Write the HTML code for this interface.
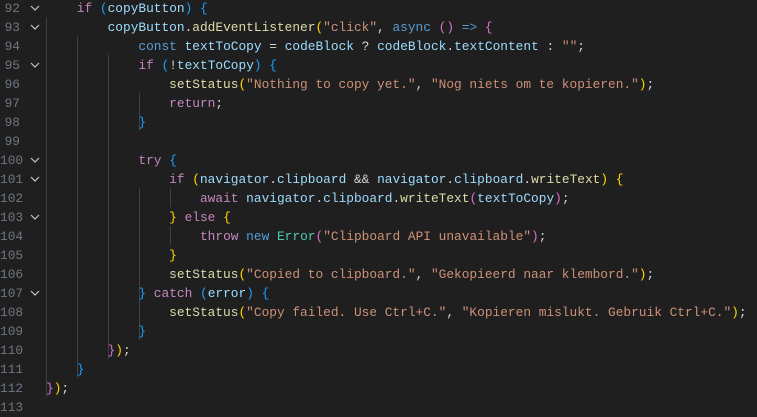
<!DOCTYPE html>
<html><head><meta charset="utf-8"><style>
body{margin:0;width:757px;height:417px;background:#1f1f1f;overflow:hidden;position:relative;font-family:"Liberation Mono",monospace;font-size:12.83px}
.l{position:absolute;left:0;height:19px;line-height:19px;width:757px;white-space:pre}
.n{position:absolute;left:0;width:20px;text-align:right;color:#6e7681}
.c{position:absolute;left:46px;color:#d4d4d4}
.f{position:absolute;left:29px;top:0;width:12px;height:19px}
.g{position:absolute;width:1px;background:#404040}
.k{color:#c586c0}.b{color:#569cd6}.v{color:#9cdcfe}.fn{color:#dcdcaa}.s{color:#ce9178}.t{color:#4ec9b0}
.y{color:#ffd700}.o{color:#da70d6}.u{color:#179fff}
</style></head><body>
<div class="g" style="left:46px;top:17px;height:380px"></div>
<div class="g" style="left:77px;top:36px;height:342px"></div>
<div class="g" style="left:108px;top:55px;height:304px"></div>
<div class="g" style="left:139px;top:93px;height:38px"></div>
<div class="g" style="left:139px;top:188px;height:152px"></div>
<div class="g" style="left:170px;top:188px;height:19px"></div>
<div class="g" style="left:170px;top:226px;height:19px"></div>

<div class="l" style="top:-1.5px"><span class="n">92</span><svg class="f" viewBox="0 0 12 19"><path d="M2 7l4 4 4-4" stroke="#c5c5c5" fill="none" stroke-width="1.2"/></svg><span class="c">    <span class="k">if</span> <span class="u">(</span><span class="v">copyButton</span><span class="u">)</span> <span class="u">{</span></span></div>
<div class="l" style="top:17.5px"><span class="n">93</span><svg class="f" viewBox="0 0 12 19"><path d="M2 7l4 4 4-4" stroke="#c5c5c5" fill="none" stroke-width="1.2"/></svg><span class="c">        <span class="v">copyButton</span>.<span class="fn">addEventListener</span><span class="y">(</span><span class="s">"click"</span>, <span class="b">async</span> <span class="o">()</span> <span class="b">=&gt;</span> <span class="o">{</span></span></div>
<div class="l" style="top:36.5px"><span class="n">94</span><span class="c">            <span class="b">const</span> <span class="v">textToCopy</span> = <span class="v">codeBlock</span> ? <span class="v">codeBlock</span>.<span class="v">textContent</span> : <span class="s">""</span>;</span></div>
<div class="l" style="top:55.5px"><span class="n">95</span><svg class="f" viewBox="0 0 12 19"><path d="M2 7l4 4 4-4" stroke="#c5c5c5" fill="none" stroke-width="1.2"/></svg><span class="c">            <span class="k">if</span> <span class="u">(</span>!<span class="v">textToCopy</span><span class="u">)</span> <span class="u">{</span></span></div>
<div class="l" style="top:74.5px"><span class="n">96</span><span class="c">                <span class="fn">setStatus</span><span class="y">(</span><span class="s">"Nothing to copy yet."</span>, <span class="s">"Nog niets om te kopieren."</span><span class="y">)</span>;</span></div>
<div class="l" style="top:93.5px"><span class="n">97</span><span class="c">                <span class="k">return</span>;</span></div>
<div class="l" style="top:112.5px"><span class="n">98</span><span class="c">            <span class="u">}</span></span></div>
<div class="l" style="top:131.5px"><span class="n">99</span></div>
<div class="l" style="top:150.5px"><span class="n">100</span><svg class="f" viewBox="0 0 12 19"><path d="M2 7l4 4 4-4" stroke="#c5c5c5" fill="none" stroke-width="1.2"/></svg><span class="c">            <span class="k">try</span> <span class="u">{</span></span></div>
<div class="l" style="top:169.5px"><span class="n">101</span><svg class="f" viewBox="0 0 12 19"><path d="M2 7l4 4 4-4" stroke="#c5c5c5" fill="none" stroke-width="1.2"/></svg><span class="c">                <span class="k">if</span> <span class="y">(</span><span class="v">navigator</span>.<span class="v">clipboard</span> &amp;&amp; <span class="v">navigator</span>.<span class="v">clipboard</span>.<span class="fn">writeText</span><span class="y">)</span> <span class="y">{</span></span></div>
<div class="l" style="top:188.5px"><span class="n">102</span><span class="c">                    <span class="k">await</span> <span class="v">navigator</span>.<span class="v">clipboard</span>.<span class="fn">writeText</span><span class="o">(</span><span class="v">textToCopy</span><span class="o">)</span>;</span></div>
<div class="l" style="top:207.5px"><span class="n">103</span><svg class="f" viewBox="0 0 12 19"><path d="M2 7l4 4 4-4" stroke="#c5c5c5" fill="none" stroke-width="1.2"/></svg><span class="c">                <span class="y">}</span> <span class="k">else</span> <span class="y">{</span></span></div>
<div class="l" style="top:226.5px"><span class="n">104</span><span class="c">                    <span class="k">throw</span> <span class="b">new</span> <span class="t">Error</span><span class="o">(</span><span class="s">"Clipboard API unavailable"</span><span class="o">)</span>;</span></div>
<div class="l" style="top:245.5px"><span class="n">105</span><span class="c">                <span class="y">}</span></span></div>
<div class="l" style="top:264.5px"><span class="n">106</span><span class="c">                <span class="fn">setStatus</span><span class="y">(</span><span class="s">"Copied to clipboard."</span>, <span class="s">"Gekopieerd naar klembord."</span><span class="y">)</span>;</span></div>
<div class="l" style="top:283.5px"><span class="n">107</span><svg class="f" viewBox="0 0 12 19"><path d="M2 7l4 4 4-4" stroke="#c5c5c5" fill="none" stroke-width="1.2"/></svg><span class="c">            <span class="u">}</span> <span class="k">catch</span> <span class="u">(</span><span class="v">error</span><span class="u">)</span> <span class="u">{</span></span></div>
<div class="l" style="top:302.5px"><span class="n">108</span><span class="c">                <span class="fn">setStatus</span><span class="y">(</span><span class="s">"Copy failed. Use Ctrl+C."</span>, <span class="s">"Kopieren mislukt. Gebruik Ctrl+C."</span><span class="y">)</span>;</span></div>
<div class="l" style="top:321.5px"><span class="n">109</span><span class="c">            <span class="u">}</span></span></div>
<div class="l" style="top:340.5px"><span class="n">110</span><span class="c">        <span class="o">}</span><span class="y">)</span>;</span></div>
<div class="l" style="top:359.5px"><span class="n">111</span><span class="c">    <span class="u">}</span></span></div>
<div class="l" style="top:378.5px"><span class="n">112</span><span class="c"><span class="o">}</span><span class="y">)</span>;</span></div>
<div class="l" style="top:397.5px"><span class="n">113</span></div>
</body></html>
